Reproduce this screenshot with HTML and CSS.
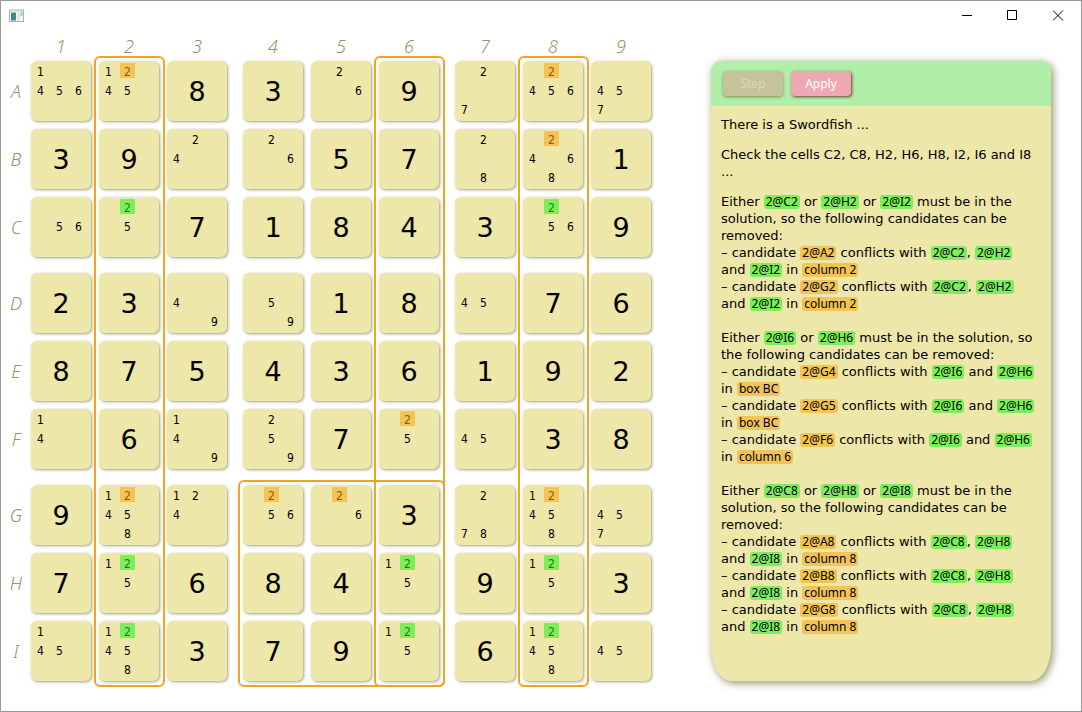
FILE: index.html
```html
<!DOCTYPE html>
<html lang="en">
<head>
<meta charset="utf-8">
<title>Sudoku solver</title>
<link rel="stylesheet" href="styles.css">
</head>
<body>
<div class="window">
  <header class="titlebar">
    <svg class="app-icon" width="16" height="14" viewBox="0 0 16 14" aria-hidden="true">
      <rect x="0.5" y="1" width="14" height="11.5" fill="#f4f6f8" stroke="#a9afb8"/>
      <path d="M1 2h13" stroke="#c3cbd6" stroke-width="1"/>
      <rect x="2" y="3.500" width="5" height="8" fill="#3c8f85"/>
      <path d="M2 11.500V7l5-3.500" fill="#56709a" opacity=".5"/>
      <rect x="8" y="3.500" width="3" height="8" fill="#dfe3e8"/>
      <rect x="11.500" y="3" width="2" height="4" fill="#9fcdb5"/>
    </svg>
    <div class="window-controls">
      <button type="button" aria-label="Minimize"><svg width="11" height="11" viewBox="0 0 11 11"><path d="M1 5.500h10"/></svg></button>
      <button type="button" aria-label="Maximize"><svg width="11" height="11" viewBox="0 0 11 11"><path d="M.5.5h9v9h-9z"/></svg></button>
      <button type="button" aria-label="Close"><svg width="11" height="11" viewBox="0 0 11 11"><path d="M0 .5l10 10M10 .5l-10 10"/></svg></button>
    </div>
  </header>
  <main class="content">
    <section class="board" aria-label="Sudoku board">
      <span class="label"></span><span class="label">1</span><span class="label">2</span><span class="label">3</span><span class="label">4</span><span class="label">5</span><span class="label">6</span><span class="label">7</span><span class="label">8</span><span class="label">9</span>

      <span class="label">A</span>
      <div class="cell notes"><span class="n1">1</span><span class="n4">4</span><span class="n5">5</span><span class="n6">6</span></div>
      <div class="cell notes"><span class="n1">1</span><span class="n2 remove">2</span><span class="n4">4</span><span class="n5">5</span></div>
      <div class="cell">8</div>
      <div class="cell">3</div>
      <div class="cell notes"><span class="n2">2</span><span class="n6">6</span></div>
      <div class="cell">9</div>
      <div class="cell notes"><span class="n2">2</span><span class="n7">7</span></div>
      <div class="cell notes"><span class="n2 remove">2</span><span class="n4">4</span><span class="n5">5</span><span class="n6">6</span></div>
      <div class="cell notes"><span class="n4">4</span><span class="n5">5</span><span class="n7">7</span></div>

      <span class="label">B</span>
      <div class="cell">3</div>
      <div class="cell">9</div>
      <div class="cell notes"><span class="n2">2</span><span class="n4">4</span></div>
      <div class="cell notes"><span class="n2">2</span><span class="n6">6</span></div>
      <div class="cell">5</div>
      <div class="cell">7</div>
      <div class="cell notes"><span class="n2">2</span><span class="n8">8</span></div>
      <div class="cell notes"><span class="n2 remove">2</span><span class="n4">4</span><span class="n6">6</span><span class="n8">8</span></div>
      <div class="cell">1</div>

      <span class="label">C</span>
      <div class="cell notes"><span class="n5">5</span><span class="n6">6</span></div>
      <div class="cell notes"><span class="n2 keep">2</span><span class="n5">5</span></div>
      <div class="cell">7</div>
      <div class="cell">1</div>
      <div class="cell">8</div>
      <div class="cell">4</div>
      <div class="cell">3</div>
      <div class="cell notes"><span class="n2 keep">2</span><span class="n5">5</span><span class="n6">6</span></div>
      <div class="cell">9</div>

      <span class="label">D</span>
      <div class="cell">2</div>
      <div class="cell">3</div>
      <div class="cell notes"><span class="n4">4</span><span class="n9">9</span></div>
      <div class="cell notes"><span class="n5">5</span><span class="n9">9</span></div>
      <div class="cell">1</div>
      <div class="cell">8</div>
      <div class="cell notes"><span class="n4">4</span><span class="n5">5</span></div>
      <div class="cell">7</div>
      <div class="cell">6</div>

      <span class="label">E</span>
      <div class="cell">8</div>
      <div class="cell">7</div>
      <div class="cell">5</div>
      <div class="cell">4</div>
      <div class="cell">3</div>
      <div class="cell">6</div>
      <div class="cell">1</div>
      <div class="cell">9</div>
      <div class="cell">2</div>

      <span class="label">F</span>
      <div class="cell notes"><span class="n1">1</span><span class="n4">4</span></div>
      <div class="cell">6</div>
      <div class="cell notes"><span class="n1">1</span><span class="n4">4</span><span class="n9">9</span></div>
      <div class="cell notes"><span class="n2">2</span><span class="n5">5</span><span class="n9">9</span></div>
      <div class="cell">7</div>
      <div class="cell notes"><span class="n2 remove">2</span><span class="n5">5</span></div>
      <div class="cell notes"><span class="n4">4</span><span class="n5">5</span></div>
      <div class="cell">3</div>
      <div class="cell">8</div>

      <span class="label">G</span>
      <div class="cell">9</div>
      <div class="cell notes"><span class="n1">1</span><span class="n2 remove">2</span><span class="n4">4</span><span class="n5">5</span><span class="n8">8</span></div>
      <div class="cell notes"><span class="n1">1</span><span class="n2">2</span><span class="n4">4</span></div>
      <div class="cell notes"><span class="n2 remove">2</span><span class="n5">5</span><span class="n6">6</span></div>
      <div class="cell notes"><span class="n2 remove">2</span><span class="n6">6</span></div>
      <div class="cell">3</div>
      <div class="cell notes"><span class="n2">2</span><span class="n7">7</span><span class="n8">8</span></div>
      <div class="cell notes"><span class="n1">1</span><span class="n2 remove">2</span><span class="n4">4</span><span class="n5">5</span><span class="n8">8</span></div>
      <div class="cell notes"><span class="n4">4</span><span class="n5">5</span><span class="n7">7</span></div>

      <span class="label">H</span>
      <div class="cell">7</div>
      <div class="cell notes"><span class="n1">1</span><span class="n2 keep">2</span><span class="n5">5</span></div>
      <div class="cell">6</div>
      <div class="cell">8</div>
      <div class="cell">4</div>
      <div class="cell notes"><span class="n1">1</span><span class="n2 keep">2</span><span class="n5">5</span></div>
      <div class="cell">9</div>
      <div class="cell notes"><span class="n1">1</span><span class="n2 keep">2</span><span class="n5">5</span></div>
      <div class="cell">3</div>

      <span class="label">I</span>
      <div class="cell notes"><span class="n1">1</span><span class="n4">4</span><span class="n5">5</span></div>
      <div class="cell notes"><span class="n1">1</span><span class="n2 keep">2</span><span class="n4">4</span><span class="n5">5</span><span class="n8">8</span></div>
      <div class="cell">3</div>
      <div class="cell">7</div>
      <div class="cell">9</div>
      <div class="cell notes"><span class="n1">1</span><span class="n2 keep">2</span><span class="n5">5</span></div>
      <div class="cell">6</div>
      <div class="cell notes"><span class="n1">1</span><span class="n2 keep">2</span><span class="n4">4</span><span class="n5">5</span><span class="n8">8</span></div>
      <div class="cell notes"><span class="n4">4</span><span class="n5">5</span></div>

      <div class="unit unit-col2"></div>
      <div class="unit unit-col6"></div>
      <div class="unit unit-col8"></div>
      <div class="unit unit-box"></div>
    </section>

    <aside class="panel">
      <div class="toolbar">
        <button class="action" type="button" disabled>Step</button>
        <button class="action" type="button">Apply</button>
      </div>
      <div class="hint">
        <p class="intro">There is a Swordfish ...</p>
        <p class="intro">Check the cells C2, C8, H2, H6, H8, I2, I6 and I8<br>...</p>
        <p>Either <mark class="keep">2@C2</mark> or <mark class="keep">2@H2</mark> or <mark class="keep">2@I2</mark> must be in the<br>solution, so the following candidates can be<br>removed:<br>
        – candidate <mark class="remove">2@A2</mark> conflicts with <mark class="keep">2@C2</mark>, <mark class="keep">2@H2</mark><br>and <mark class="keep">2@I2</mark> in <mark class="remove">column 2</mark><br>
        – candidate <mark class="remove">2@G2</mark> conflicts with <mark class="keep">2@C2</mark>, <mark class="keep">2@H2</mark><br>and <mark class="keep">2@I2</mark> in <mark class="remove">column 2</mark></p>
        <p>Either <mark class="keep">2@I6</mark> or <mark class="keep">2@H6</mark> must be in the solution, so<br>the following candidates can be removed:<br>
        – candidate <mark class="remove">2@G4</mark> conflicts with <mark class="keep">2@I6</mark> and <mark class="keep">2@H6</mark><br>in <mark class="remove">box BC</mark><br>
        – candidate <mark class="remove">2@G5</mark> conflicts with <mark class="keep">2@I6</mark> and <mark class="keep">2@H6</mark><br>in <mark class="remove">box BC</mark><br>
        – candidate <mark class="remove">2@F6</mark> conflicts with <mark class="keep">2@I6</mark> and <mark class="keep">2@H6</mark><br>in <mark class="remove">column 6</mark></p>
        <p>Either <mark class="keep">2@C8</mark> or <mark class="keep">2@H8</mark> or <mark class="keep">2@I8</mark> must be in the<br>solution, so the following candidates can be<br>removed:<br>
        – candidate <mark class="remove">2@A8</mark> conflicts with <mark class="keep">2@C8</mark>, <mark class="keep">2@H8</mark><br>and <mark class="keep">2@I8</mark> in <mark class="remove">column 8</mark><br>
        – candidate <mark class="remove">2@B8</mark> conflicts with <mark class="keep">2@C8</mark>, <mark class="keep">2@H8</mark><br>and <mark class="keep">2@I8</mark> in <mark class="remove">column 8</mark><br>
        – candidate <mark class="remove">2@G8</mark> conflicts with <mark class="keep">2@C8</mark>, <mark class="keep">2@H8</mark><br>and <mark class="keep">2@I8</mark> in <mark class="remove">column 8</mark></p>
      </div>
    </aside>
  </main>
</div>
</body>
</html>
```
FILE: styles.css
```css
:root {
  --sand: #ede7aa;
  --green: #7cee5c;
  --orange: #f3c355;
  --outline: #f5a31a;
}

* {
  box-sizing: border-box;
}

body {
  margin: 0;
  background: #fff;
  color: #000;
  font-family: "Noto Sans", "Open Sans", sans-serif;
}

.window {
  min-height: 100vh;
  border: 1px solid #999;
}

.titlebar {
  display: flex;
  align-items: center;
  justify-content: space-between;
  height: 29px;
  padding-left: 8px;
}

.window-controls {
  display: flex;
}

.window-controls button {
  display: flex;
  align-items: center;
  justify-content: center;
  width: 46px;
  height: 29px;
  padding: 0;
  border: 0;
  background: none;
}

.window-controls svg {
  fill: none;
  stroke: #000;
}

.content {
  display: flex;
  gap: 60px;
  padding: 9px 30px 29px 8px;
}

/* Tracks 3 and 6 are wider to separate the 3x3 boxes. */
.board {
  position: relative;
  display: grid;
  flex: none;
  grid-template-columns: 14px 60px 60px 68px 60px 60px 68px 60px 60px 60px;
  grid-template-rows: 14px 60px 60px 68px 60px 60px 68px 60px 60px 60px;
  gap: 8px;
}

.label {
  max-width: 60px;
  max-height: 60px;
  display: flex;
  align-items: center;
  justify-content: center;
  color: #94946a;
  font-size: 18px;
  font-style: italic;
  font-weight: 300;
  line-height: 14px;
}

.cell {
  display: flex;
  align-items: center;
  justify-content: center;
  width: 60px;
  height: 60px;
  border-radius: 6px;
  background: var(--sand);
  box-shadow: 1px 1px 3px rgba(100, 95, 40, 0.6);
  font-family: "DejaVu Sans", sans-serif;
  font-size: 27px;
}

.notes {
  display: grid;
  grid-template: repeat(3, 19px) / repeat(3, 19px);
  align-content: start;
  justify-content: start;
  justify-items: center;
  font-family: "DejaVu Sans Condensed", "DejaVu Sans", sans-serif;
  font-size: 12px;
}

.notes span {
  width: 15px;
  height: 15px;
  line-height: 19px;
  text-align: center;
}

.n1 { grid-area: 1 / 1; }
.n2 { grid-area: 1 / 2; }
.n4 { grid-area: 2 / 1; }
.n5 { grid-area: 2 / 2; }
.n6 { grid-area: 2 / 3; }
.n7 { grid-area: 3 / 1; }
.n8 { grid-area: 3 / 2; }
.n9 { grid-area: 3 / 3; }

.keep {
  background: var(--green);
}

.remove {
  background: var(--orange);
}

.notes .keep {
  color: #1d7a10;
}

.notes .remove {
  color: #8a5a08;
}

/* Outlines laid over the units that the hint refers to. */
.unit {
  position: absolute;
  inset: -5px -6px -6px -5px;
  border: 2px solid var(--outline);
  border-radius: 6px;
}

.unit-col2 { grid-area: 2 / 3 / 11 / 4; }
.unit-col6 { grid-area: 2 / 7 / 11 / 8; right: 2px; }
.unit-col8 { grid-area: 2 / 9 / 11 / 10; }
.unit-box { grid-area: 8 / 5 / 11 / 8; right: 2px; }

.panel {
  flex: 1;
  margin-top: 22px;
  border-radius: 10px 10px 20px 20px / 10px 10px 35px 35px;
  background: var(--sand);
  box-shadow: 2px 2px 8px rgba(100, 95, 40, 0.7);
}

.toolbar {
  display: flex;
  gap: 8px;
  padding: 10px 12px;
  border-radius: 10px 10px 0 0;
  background: #b0eea9;
}

.action {
  width: 60px;
  height: 25px;
  padding: 0;
  border: 0;
  border-radius: 4px;
  background: #eea9b0;
  box-shadow: 1px 1px 3px rgba(90, 40, 40, 0.9);
  color: #fff;
  font-family: inherit;
  font-size: 12px;
}

.action:disabled {
  background: #c5c39a;
  box-shadow: 0 1px 3px rgba(120, 110, 70, 0.8);
  color: #dcdcb8;
}

.hint {
  padding: 10px;
  font-family: "DejaVu Sans", sans-serif;
  font-size: 13px;
  line-height: 17px;
  white-space: nowrap;
}

.hint p {
  margin: 0 0 17px;
}

.hint .intro {
  margin-bottom: 13px;
}

.hint mark {
  display: inline-block;
  padding: 0 2px 1px;
  border-radius: 3px;
  color: inherit;
  font-family: "Noto Sans", sans-serif;
  font-size: 12px;
  line-height: 13px;
}
```
